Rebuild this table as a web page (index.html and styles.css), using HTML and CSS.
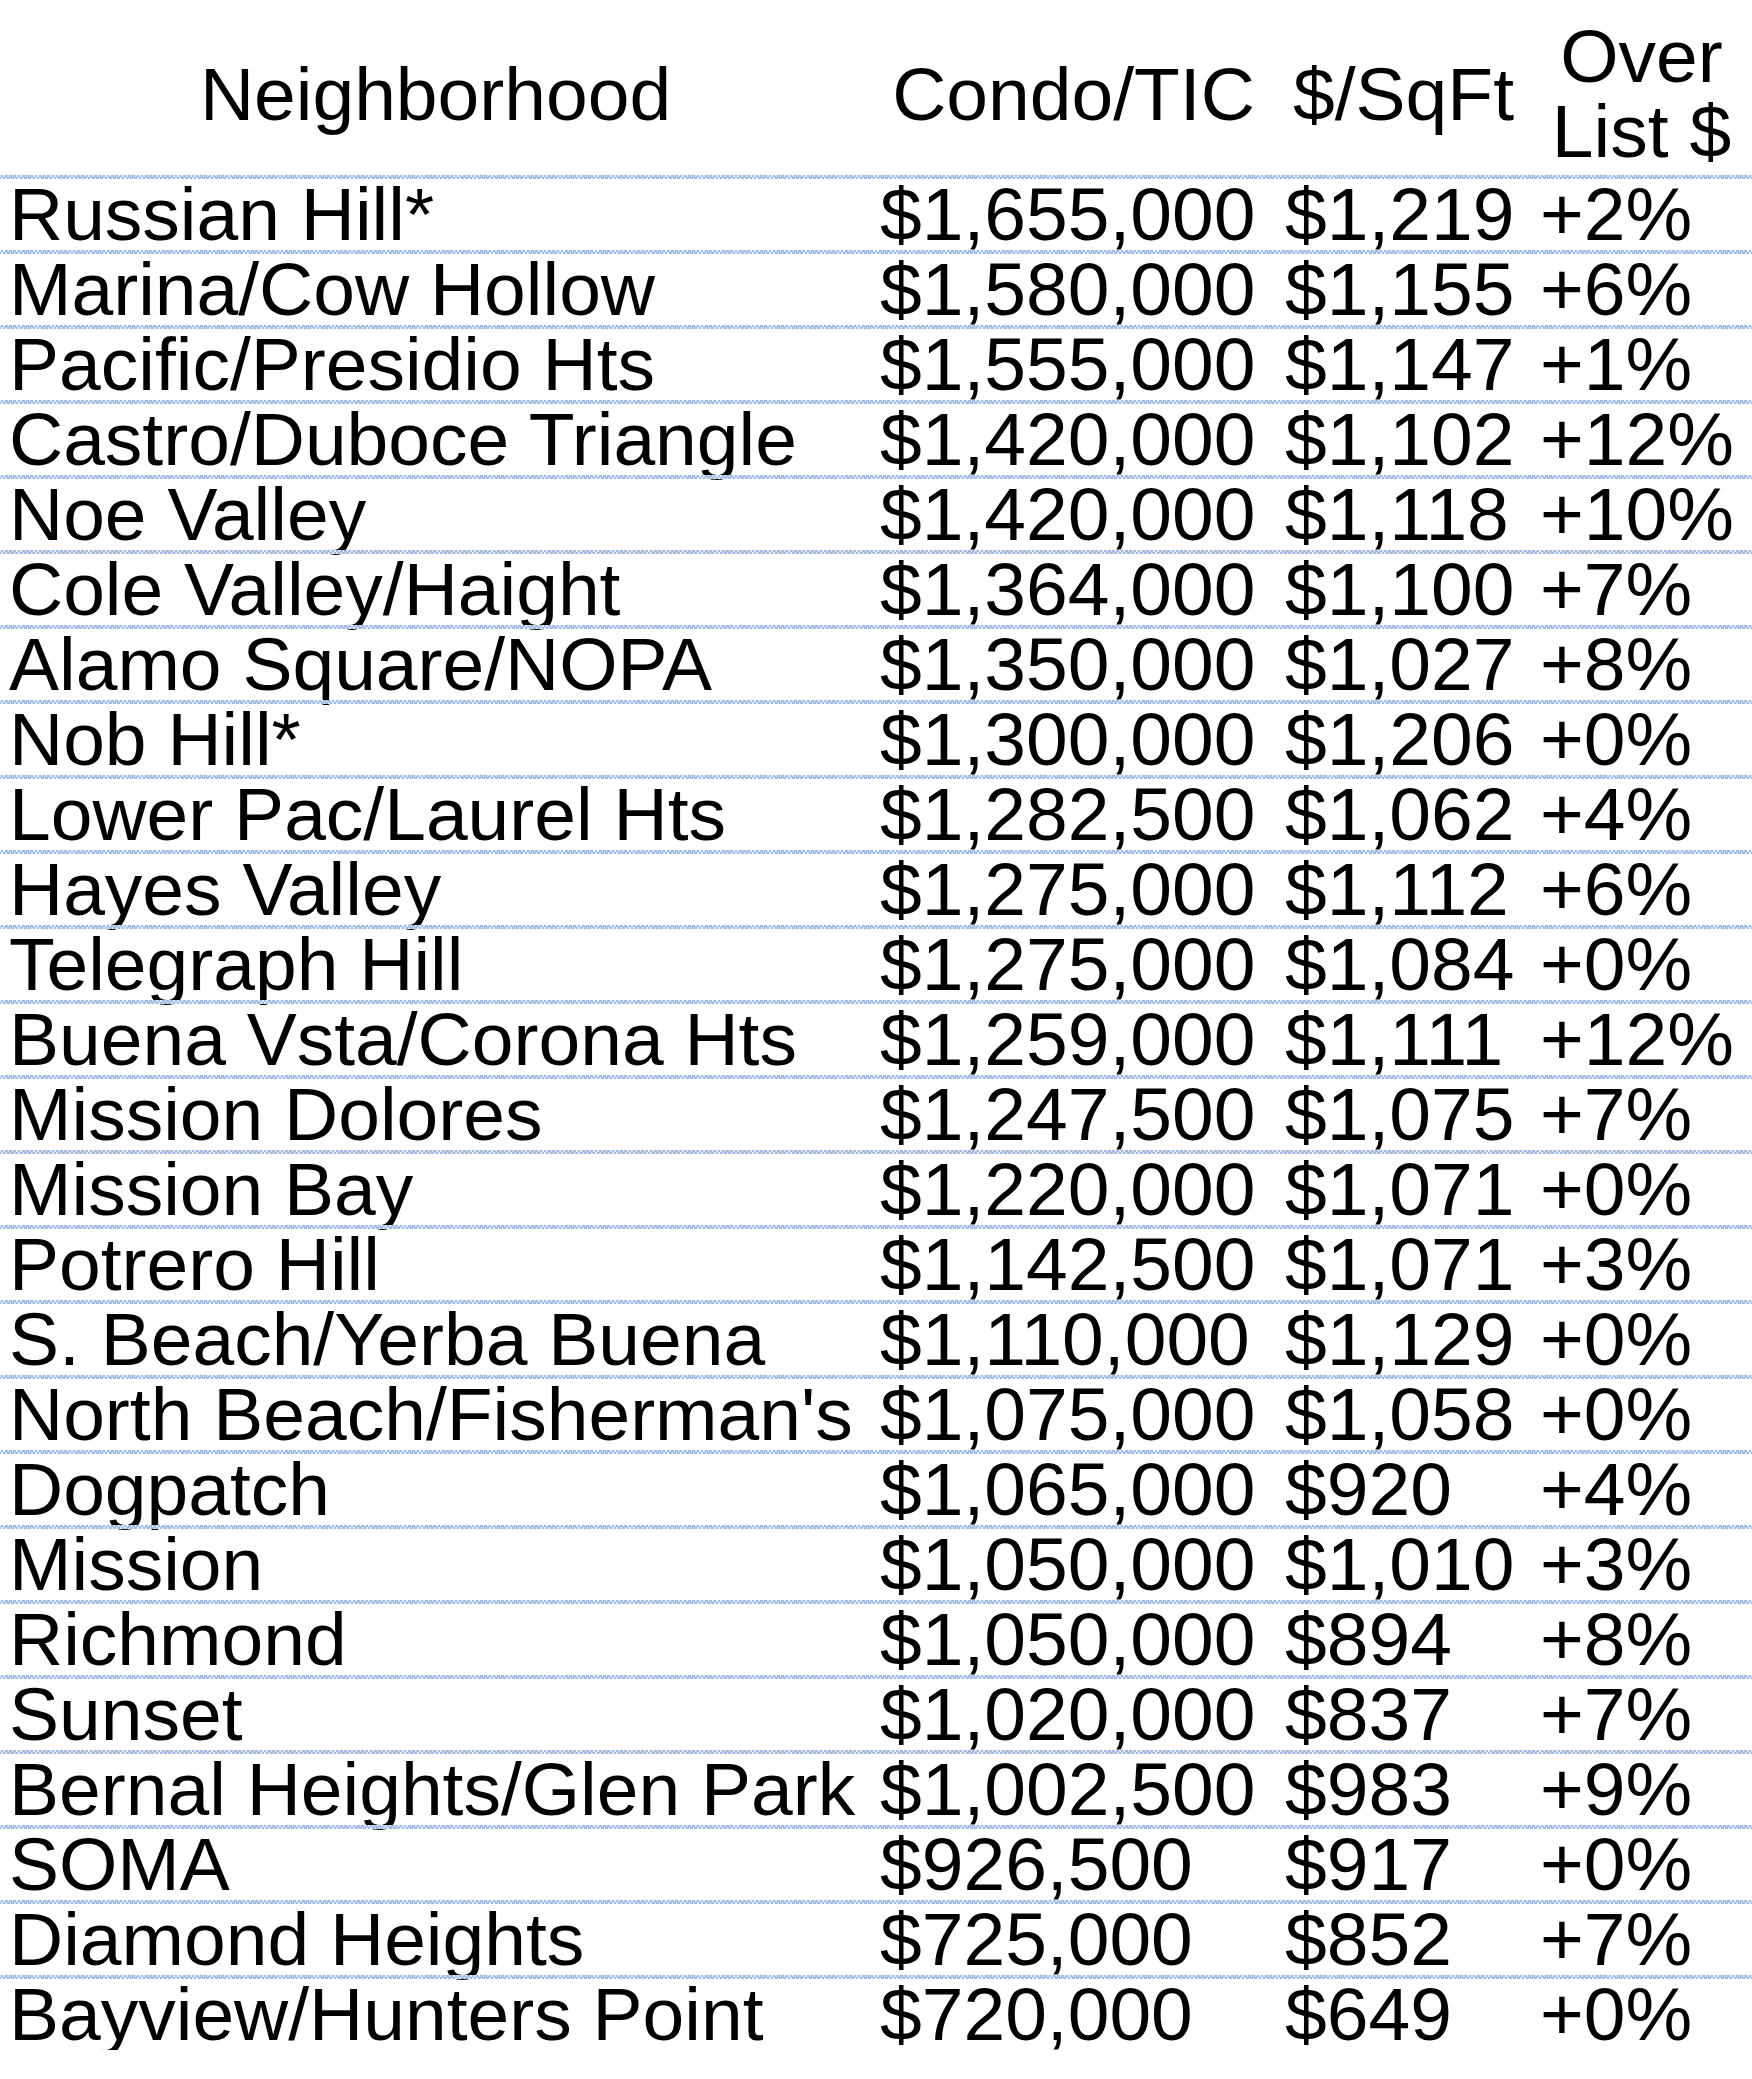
FILE: index.html
```html
<!DOCTYPE html>
<html lang="en">
<head>
<meta charset="utf-8">
<title>Condo/TIC by Neighborhood</title>
<link rel="stylesheet" href="styles.css">
</head>
<body>
<div class="table">
  <div class="head">
    <div class="hcell">Neighborhood</div>
    <div class="hcell">Condo/TIC</div>
    <div class="hcell">$/SqFt</div>
    <div class="hcell">Over<br>List $</div>
  </div>
  <div class="row"><div class="cell">Russian Hill*</div><div class="cell">$1,655,000</div><div class="cell">$1,219</div><div class="cell">+2%</div></div>
  <div class="row"><div class="cell">Marina/Cow Hollow</div><div class="cell">$1,580,000</div><div class="cell">$1,155</div><div class="cell">+6%</div></div>
  <div class="row"><div class="cell">Pacific/Presidio Hts</div><div class="cell">$1,555,000</div><div class="cell">$1,147</div><div class="cell">+1%</div></div>
  <div class="row"><div class="cell">Castro/Duboce Triangle</div><div class="cell">$1,420,000</div><div class="cell">$1,102</div><div class="cell">+12%</div></div>
  <div class="row"><div class="cell">Noe Valley</div><div class="cell">$1,420,000</div><div class="cell">$1,118</div><div class="cell">+10%</div></div>
  <div class="row"><div class="cell">Cole Valley/Haight</div><div class="cell">$1,364,000</div><div class="cell">$1,100</div><div class="cell">+7%</div></div>
  <div class="row"><div class="cell">Alamo Square/NOPA</div><div class="cell">$1,350,000</div><div class="cell">$1,027</div><div class="cell">+8%</div></div>
  <div class="row"><div class="cell">Nob Hill*</div><div class="cell">$1,300,000</div><div class="cell">$1,206</div><div class="cell">+0%</div></div>
  <div class="row"><div class="cell">Lower Pac/Laurel Hts</div><div class="cell">$1,282,500</div><div class="cell">$1,062</div><div class="cell">+4%</div></div>
  <div class="row"><div class="cell">Hayes Valley</div><div class="cell">$1,275,000</div><div class="cell">$1,112</div><div class="cell">+6%</div></div>
  <div class="row"><div class="cell">Telegraph Hill</div><div class="cell">$1,275,000</div><div class="cell">$1,084</div><div class="cell">+0%</div></div>
  <div class="row"><div class="cell">Buena Vsta/Corona Hts</div><div class="cell">$1,259,000</div><div class="cell">$1,111</div><div class="cell">+12%</div></div>
  <div class="row"><div class="cell">Mission Dolores</div><div class="cell">$1,247,500</div><div class="cell">$1,075</div><div class="cell">+7%</div></div>
  <div class="row"><div class="cell">Mission Bay</div><div class="cell">$1,220,000</div><div class="cell">$1,071</div><div class="cell">+0%</div></div>
  <div class="row"><div class="cell">Potrero Hill</div><div class="cell">$1,142,500</div><div class="cell">$1,071</div><div class="cell">+3%</div></div>
  <div class="row"><div class="cell">S. Beach/Yerba Buena</div><div class="cell">$1,110,000</div><div class="cell">$1,129</div><div class="cell">+0%</div></div>
  <div class="row"><div class="cell">North Beach/Fisherman's</div><div class="cell">$1,075,000</div><div class="cell">$1,058</div><div class="cell">+0%</div></div>
  <div class="row"><div class="cell">Dogpatch</div><div class="cell">$1,065,000</div><div class="cell">$920</div><div class="cell">+4%</div></div>
  <div class="row"><div class="cell">Mission</div><div class="cell">$1,050,000</div><div class="cell">$1,010</div><div class="cell">+3%</div></div>
  <div class="row"><div class="cell">Richmond</div><div class="cell">$1,050,000</div><div class="cell">$894</div><div class="cell">+8%</div></div>
  <div class="row"><div class="cell">Sunset</div><div class="cell">$1,020,000</div><div class="cell">$837</div><div class="cell">+7%</div></div>
  <div class="row"><div class="cell">Bernal Heights/Glen Park</div><div class="cell">$1,002,500</div><div class="cell">$983</div><div class="cell">+9%</div></div>
  <div class="row"><div class="cell">SOMA</div><div class="cell">$926,500</div><div class="cell">$917</div><div class="cell">+0%</div></div>
  <div class="row"><div class="cell">Diamond Heights</div><div class="cell">$725,000</div><div class="cell">$852</div><div class="cell">+7%</div></div>
  <div class="row"><div class="cell">Bayview/Hunters Point</div><div class="cell">$720,000</div><div class="cell">$649</div><div class="cell">+0%</div></div>
</div>
</body>
</html>
```

FILE: styles.css
```css
html, body {
  margin: 0;
  padding: 0;
  background: #ffffff;
}

body {
  font-family: "Liberation Sans", Arial, sans-serif;
  font-size: 75px;
  color: #000000;
}

.table {
  width: 1752px;
  display: flex;
  flex-direction: column;
}

.head,
.row {
  display: grid;
  grid-template-columns: 871px 405px 255px 221px;
}

.head {
  height: 175px;
  box-sizing: border-box;
  padding: 19px 0 6px;
}

.hcell {
  align-self: center;
  text-align: center;
  line-height: 75px;
  white-space: nowrap;
}

.row {
  height: 75px;
  box-sizing: border-box;
  padding-top: 4px;
  background-image:
    repeating-linear-gradient(45deg, #9fbbe5 0 1.2px, transparent 1.2px 3px),
    repeating-linear-gradient(-45deg, #9fbbe5 0 1.2px, transparent 1.2px 3px),
    linear-gradient(#e3ebf8, #e3ebf8);
  background-size: 100% 4px, 100% 4px, 100% 4px;
  background-repeat: no-repeat;
  background-position: 0 0, 0 0, 0 0;
}

.cell {
  line-height: 71px;
  padding-left: 9px;
  white-space: nowrap;
}
```
